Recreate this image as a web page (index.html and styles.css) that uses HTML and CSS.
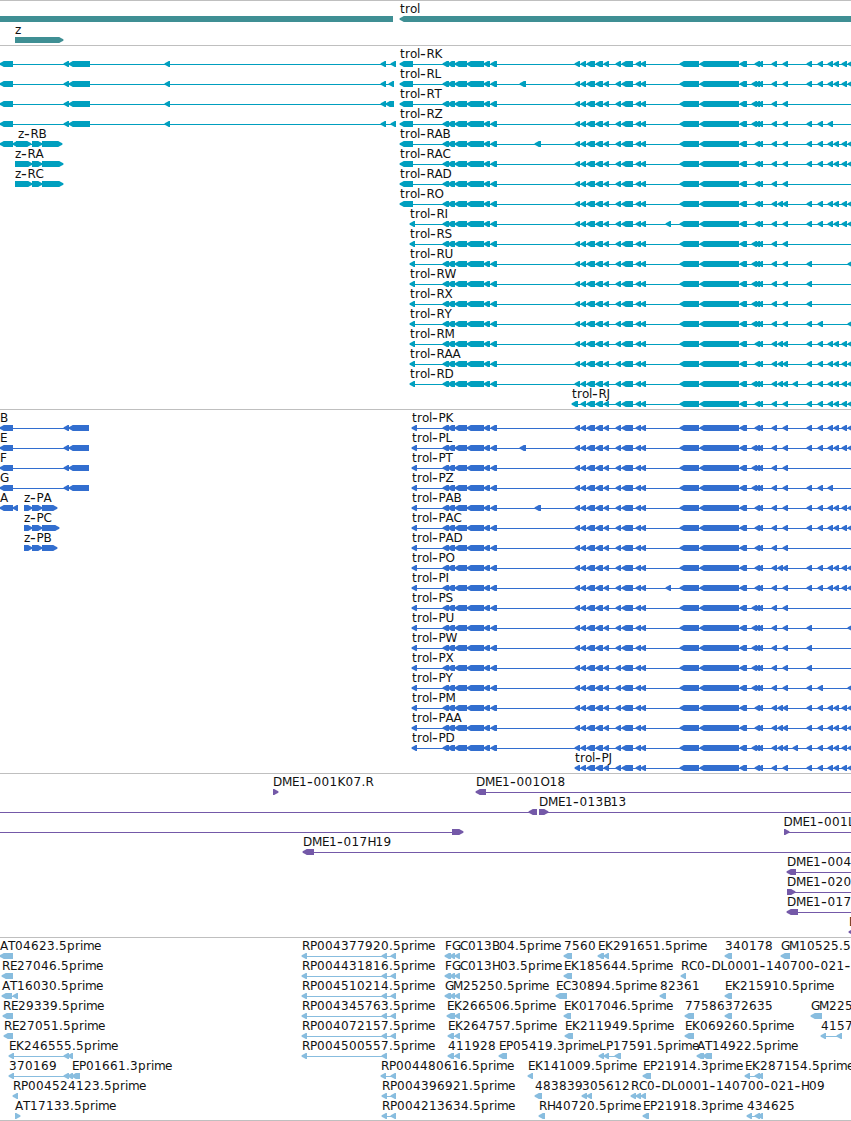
FILE: index.html
```html
<!DOCTYPE html>
<html lang="en">
<head>
<meta charset="utf-8">
<title>Genome browser</title>
<link rel="stylesheet" href="styles.css">
</head>
<body>
<main class="browser">
  <section class="track track-genes" id="genes"></section>
  <section class="track track-transcripts" id="transcripts"></section>
  <section class="track track-proteins" id="proteins"></section>
  <section class="track track-clones" id="clones"></section>
  <section class="track track-ests" id="ests"></section>
</main>
<script src="tracks.js"></script>
</body>
</html>
```
FILE: styles.css
```css
body {
  margin: 0;
  background: #fff;
  overflow: hidden;
}

.browser {
  display: flex;
  flex-direction: column;
  width: 851px;
  height: 1121px;
  overflow: hidden;
}

.track {
  flex: none;
  box-sizing: border-box;
  border-top: 1px solid #bfbfbf;
  overflow: hidden;
}

.track-genes { height: 45px; color: #3f8f94; }
.track-transcripts { height: 364px; color: #009fbf; }
.track-proteins { height: 364px; color: #326ecf; }
.track-clones { height: 164px; color: #7459a8; }
.track-ests { height: 184px; color: #88bddf; border-bottom: 1px solid #bfbfbf; }

.canvas {
  display: block;
  width: 851px;
  height: 100%;
}

.feature { fill: currentColor; }

.label {
  fill: #111;
  font: 12px "DejaVu Sans", sans-serif;
}

.dash { font-size: 16px; }
```
FILE: tracks.js
```js
const NS = "http://www.w3.org/2000/svg";

const ADVANCE = {
  A: 8, B: 7, C: 8, D: 9, E: 7, F: 7, G: 8, H: 8, I: 4, J: 4, K: 8, L: 7, M: 10,
  O: 9, P: 7, R: 8, S: 8, T: 7, U: 9, W: 12, X: 8, Y: 7, Z: 8,
  "-": 6.5, ".": 4, t: 5, r: 5, o: 7, l: 3, z: 6, p: 8, i: 3, m: 11, e: 7
};

function add(parent, name, attrs) {
  const node = document.createElementNS(NS, name);
  for (const key in attrs) node.setAttribute(key, attrs[key]);
  parent.appendChild(node);
  return node;
}

function label(svg, x, y, text) {
  const node = add(svg, "text", { class: "label", y });
  for (const part of text.split(/(-)/)) {
    if (!part) continue;
    const xs = [];
    for (const ch of part) {
      xs.push(x);
      x += ADVANCE[ch] || 8;
    }
    const dash = part === "-";
    add(node, "tspan", { class: dash ? "dash" : "chars", x: xs.join(" "), y: dash ? y + 1 : y }).textContent = part;
  }
}

function block(svg, y, a, b, forward) {
  const dir = forward ? -1 : 1;
  const tip = (forward ? b : a) - 0.4 * dir, back = forward ? a : b;
  const points = [
    [back, 0], [tip + 4.2 * dir, 0], [tip + 2 * dir, 1.2], [tip, 2.2],
    [tip, 3.8], [tip + 2 * dir, 4.8], [tip + 4.2 * dir, 6], [back, 6]
  ];
  add(svg, "polygon", { class: "feature", points: points.map(p => p[0] + "," + (p[1] + y)).join(" ") });
}

// A row is a list of [label, labelX, blocks, lineStart, lineEnd].
// Blocks are "from-to" pairs; a leading ">" points the block to the right.
function draw(id, rows, pitch = 20) {
  const svg = add(document.getElementById(id), "svg", { class: "canvas" });
  rows.forEach((row, i) => {
    const top = i * pitch;
    for (const [, , blocks, from, to] of row) {
      if (to) add(svg, "rect", { class: "feature", x: from, y: top + 18, width: to - from, height: 1 });
      for (const item of blocks.split(" ").filter(Boolean)) {
        const forward = item[0] === ">";
        const [a, b] = item.replace(">", "").split("-").map(Number);
        block(svg, top + 15, a, b, forward);
      }
    }
    for (const [text, x] of row) if (text) label(svg, x, top + 12, text);
  });
  return svg;
}

const CORE = "443-449 448-455 455-467 467-484 484-490 491-497 ";
const EXONS = "581-586 587-595 596-603 604-609 616-621 622-633 636-641 641-646 680-699 700-739 740-747 755-760 758-763 772-777 783-788 ";
const TAILS = {
  full: "807-812 818-823 828-833 834-839 842-847 848-853",
  none: "",
  three: "807-812 818-823 828-833",
  one: "807-812",
  edge: "807-812 848-853",
  two: "807-812 818-823 848-853"
};
const B = "752-757 ", M = "778-783 ";
const ISOFORMS = [
  ["K", "", "full"], ["L", B + "520-526 ", "full"], ["T", B, "none"], ["Z", B, "three"],
  ["AB", "535-541 ", "full"], ["AC", "", "full"], ["AD", "", "none"], ["O", M, "full"],
  ["I", "666-671 ", "full"], ["S", B, "none"], ["U", B, "edge"], ["W", B, "one"],
  ["X", B, "one"], ["Y", B, "two"], ["M", M, "full"], ["AA", M, "full"],
  ["D", B + M + "793-798 ", "full"], ["J", "", "full"]
];

function trol(kind, left) {
  return ISOFORMS.map(([name, extra, tail], i) => {
    let start, head;
    if (name === "J") {
      start = kind === "R" ? 572 : 575;
      head = kind === "R" ? "572-578 " : "575-580 ";
    } else {
      start = kind === "P" ? 412 : i < 8 ? 400 : 410;
      head = start + "-" + (start === 400 ? 413 : start + 5) + " " + CORE + "575-580 ";
    }
    const main = ["trol-" + kind + name, start, head + EXONS + extra + TAILS[tail], start + 2, 851];
    return [...(left[i] || []), main];
  });
}

const genes = draw("genes", [
  [["trol", 400, "400-861"]],
  [["z", 15, ">15-63"]]
], 21);
add(genes, "rect", { class: "feature", x: 0, y: 15, width: 393, height: 6 });

const ZW = "0-13 64-69 69-90 165-170 381-386 ";
draw("transcripts", trol("R", [
  [["", 0, ZW + "391-396", 0, 396]],
  [["", 0, ZW + "389-394", 0, 394]],
  [["", 0, ZW + "386-394", 0, 394]],
  [["", 0, ZW + "391-396", 0, 396]],
  [["", 0, "0-13 13-20", 0, 20], ["z-RB", 18, ">16-31 >32-42 >42-62", 16, 60]],
  [["z-RA", 15, ">15-32 >32-42 >42-63", 15, 61]],
  [["z-RC", 15, ">15-32 >32-42 >42-63", 15, 61]]
]));

const ZP = "0-13 64-69 69-89";
draw("proteins", trol("P", [
  [["B", 0, ZP, 0, 89]],
  [["E", 0, ZP, 0, 89]],
  [["F", 0, ZP, 0, 89]],
  [["G", 0, ZP, 0, 89]],
  [["A", 0, "0-13 13-18", 0, 18], ["z-PA", 24, ">24-32 >32-42 >42-57", 24, 55]],
  [["z-PC", 24, ">24-32 >32-42 >42-59", 24, 57]],
  [["z-PB", 24, ">24-32 >32-42 >42-57", 24, 55]]
]));

draw("clones", [
  [["DME1-001K07.R", 273, ">273-278"], ["DME1-001O18", 476, "476-486", 478, 851]],
  [["", 0, "529-537", 0, 535], ["DME1-013B13", 539, ">539-548", 540, 851]],
  [["", 0, ">452-463", 0, 460], ["DME1-001L", 783.5, ">784-789", 785, 851]],
  [["DME1-017H19", 303, "303-314", 305, 851]],
  [["DME1-004", 787, "787-796", 789, 851]],
  [["DME1-020", 787, ">787-795", 788, 851]],
  [["DME1-017", 787, "787-798", 789, 851]],
  [["D", 849, "849-858"]]
]);

const rp = (n, blocks = "302-307 382-387 391-396", end = 396) =>
  ["RP" + n + ".5prime", 302, blocks, 304, end];
const rq = (n, x) => ["RP" + n + ".5prime", x, x + "-" + (x + 5) + " 391-396", x + 2, 396];
const FGC = "445-451 450-455 455-460";
draw("ests", [
  [["AT04623.5prime", 0, "0-13"], rp("004377920"), ["FGC013B04.5prime", 445, FGC],
   ["7560", 564, "564-572"], ["EK291651.5prime", 598, "598-604 604-609"],
   ["340178", 725, "725-732"], ["GM10525.5prime", 781, "781-790"]],
  [["RE27046.5prime", 2, "2-13"], rp("004431816"), ["FGC013H03.5prime", 445, FGC],
   ["EK185644.5prime", 564, "564-572"], ["RC0-DL0001-140700-021-", 681, "681-686"]],
  [["AT16030.5prime", 2, "2-12 13-18", 4, 18], rp("004510214"), ["GM25250.5prime", 445, FGC],
   ["EC30894.5prime", 556, "556-567"], ["82361", 660, "660-666"], ["EK215910.5prime", 725, "725-732"]],
  [["RE29339.5prime", 3, "3-13"], rp("004345763"), ["EK266506.5prime", 447, "447-455 455-460"],
   ["EK017046.5prime", 564, "564-571"], ["77586", 685, "685-694"], ["372635", 725, "725-732"],
   ["GM225", 811, "811-822"]],
  [["RE27051.5prime", 4, "4-13"], rp("004072157"), ["EK264757.5prime", 448, "448-454 455-460", 450, 460],
   ["EK211949.5prime", 565, "565-573"], ["EK069260.5prime", 685, "685-694"],
   ["4157", 821, "821-826 837-842", 823, 842]],
  [["EK246555.5prime", 9, "9-14 64-69 68-73", 11, 73], rp("004500557", "302-307 382-387", 387),
   ["411928", 448, "448-454 455-460", 450, 460], ["EP05419.3prime", 499, "499-507"],
   ["LP17591.5prime", 599, "599-604 604-609 615-621", 601, 621], ["AT14922.5prime", 697, "697-704 703-712"]],
  [["370169", 9, "9-14 64-69 68-73", 11, 73], ["EP01661.3prime", 72, "72-80"], rq("004480616", 381),
   ["EK141009.5prime", 528, "528-533"], ["EP21914.3prime", 643, "643-651"],
   ["EK287154.5prime", 745, "745-750 755-760 758-763", 747, 763]],
  [["RP004524123.5prime", 13, "13-18"], rq("004396921", 382), ["483839", 535, "535-542"],
   ["305612", 582, "582-587 587-592"], ["RC0-DL0001-140700-021-H09", 631, "631-636 636-641 641-646"]],
  [["AT17133.5prime", 15, ">15-20"], rq("004213634", 382), ["RH40720.5prime", 539, "539-545"],
   ["EP21918.3prime", 643, "643-649"], ["434625", 747, "747-752 755-760 758-763", 749, 763]]
]);
```
